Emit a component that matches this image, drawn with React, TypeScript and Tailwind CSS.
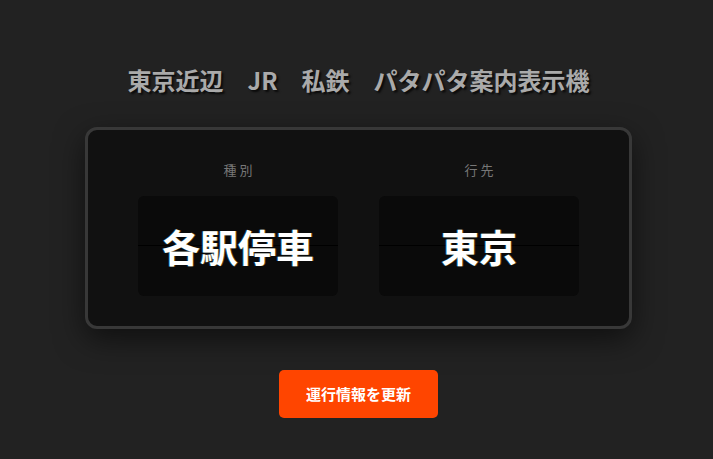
import React from "react";

const FONT = "font-['Noto_Sans_CJK_JP','Noto_Sans',sans-serif]";

function Flap({ label, value }: { label: string; value: string }) {
  return (
    <div className="flex flex-col items-center">
      <p className="text-[13px] leading-[20px] tracking-[3px] text-[#777] mb-[16px] pl-[3px]">
        {label}
      </p>
      <div className="relative w-[200px] h-[100px] rounded-[6px] bg-[#0a0a0a] flex items-center justify-center">
        <div className="absolute left-0 right-0 top-[49px] h-px bg-black" />
        <span className="relative text-[38px] leading-none font-bold text-white [text-shadow:1px_0_0_rgba(255,170,0,0.35),-1px_0_0_rgba(0,170,255,0.35)]">
          {value}
        </span>
      </div>
    </div>
  );
}

export default function App() {
  return (
    <div className={`min-h-screen bg-[#222] flex flex-col items-center pt-[64px] pl-[4px] ${FONT}`}>
      <h1 className="text-[24px] leading-[32px] font-bold text-[#aaa] [text-shadow:2px_2px_2px_rgba(0,0,0,0.7)] mb-[31px]">
        東京近辺　JR　私鉄　パタパタ案内表示機
      </h1>
      <div className="flex gap-[41px] px-[50px] pt-[30px] pb-[30px] bg-[#111] border-[3px] border-[#383838] rounded-[12px] shadow-[0_10px_30px_rgba(0,0,0,0.55)]">
        <Flap label="種別" value="各駅停車" />
        <Flap label="行先" value="東京" />
      </div>
      <button className="mt-[41px] h-[48px] px-[27px] rounded-[5px] bg-[#ff4500] text-white text-[15px] font-bold">
        運行情報を更新
      </button>
    </div>
  );
}
